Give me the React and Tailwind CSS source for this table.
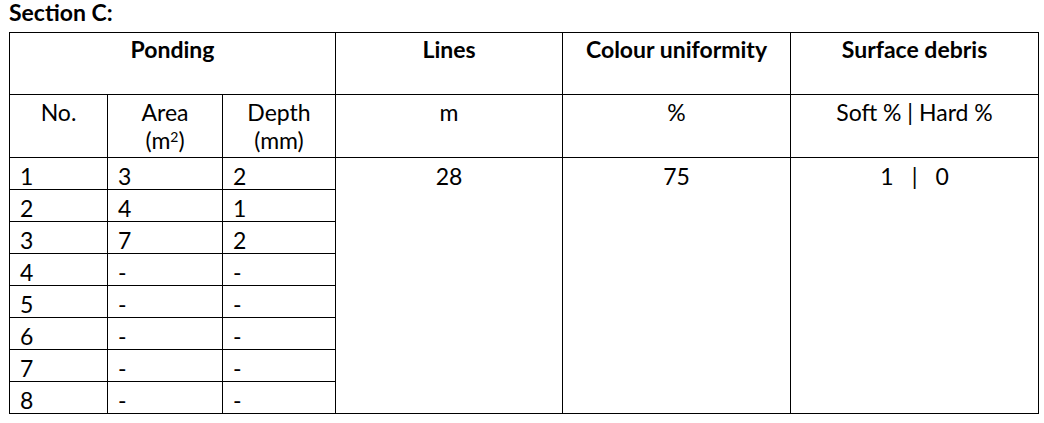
const rows = [
  ['1', '3', '2'],
  ['2', '4', '1'],
  ['3', '7', '2'],
  ['4', '-', '-'],
  ['5', '-', '-'],
  ['6', '-', '-'],
  ['7', '-', '-'],
  ['8', '-', '-'],
]

const cell = 'border border-black align-top'

export default function App() {
  return (
    <div className="bg-white text-black min-h-screen pl-[9px] font-['Lato',sans-serif] text-[23px]">
      <div className="font-bold leading-[24px] mb-2">Section C:</div>

      <table className="table-fixed border-collapse w-[1029px]">
        <colgroup>
          <col className="w-[98px]" />
          <col className="w-[115px]" />
          <col className="w-[113px]" />
          <col className="w-[227px]" />
          <col className="w-[228px]" />
          <col className="w-[248px]" />
        </colgroup>
        <tbody>
          {/* heading row */}
          <tr className="h-[62px] leading-[28px] font-bold text-center">
            <td colSpan={3} className={`${cell} pt-[2px]`}>Ponding</td>
            <td className={`${cell} pt-[2px]`}>Lines</td>
            <td className={`${cell} pt-[2px]`}>Colour uniformity</td>
            <td className={`${cell} pt-[2px]`}>Surface debris</td>
          </tr>

          {/* units row */}
          <tr className="h-[63px] leading-[28px] text-center">
            <td className={`${cell} pt-[3px]`}>No.</td>
            <td className={`${cell} pt-[3px]`}>
              Area
              <br />
              (m<sup className="relative -top-[7px] text-[14px] leading-none">2</sup>)
            </td>
            <td className={`${cell} pt-[3px]`}>
              Depth
              <br />
              (mm)
            </td>
            <td className={`${cell} pt-[3px]`}>m</td>
            <td className={`${cell} pt-[3px]`}>%</td>
            <td className={`${cell} pt-[3px]`}>Soft % | Hard %</td>
          </tr>

          {rows.map(([no, area, depth], i) => (
            <tr key={no} className="h-[32px] leading-[24px]">
              <td className={`${cell} pt-[6px] pl-[10px]`}>{no}</td>
              <td className={`${cell} pt-[6px] pl-[10px]`}>{area}</td>
              <td className={`${cell} pt-[6px] pl-[10px]`}>{depth}</td>
              {i === 0 && (
                <>
                  <td rowSpan={8} className={`${cell} pt-[6px] text-center`}>28</td>
                  <td rowSpan={8} className={`${cell} pt-[6px] text-center`}>75</td>
                  <td rowSpan={8} className={`${cell} pt-[6px] text-center`}>
                    <span className="inline-flex gap-[18px]">
                      <span>1</span>
                      <span>|</span>
                      <span>0</span>
                    </span>
                  </td>
                </>
              )}
            </tr>
          ))}
        </tbody>
      </table>
    </div>
  )
}
